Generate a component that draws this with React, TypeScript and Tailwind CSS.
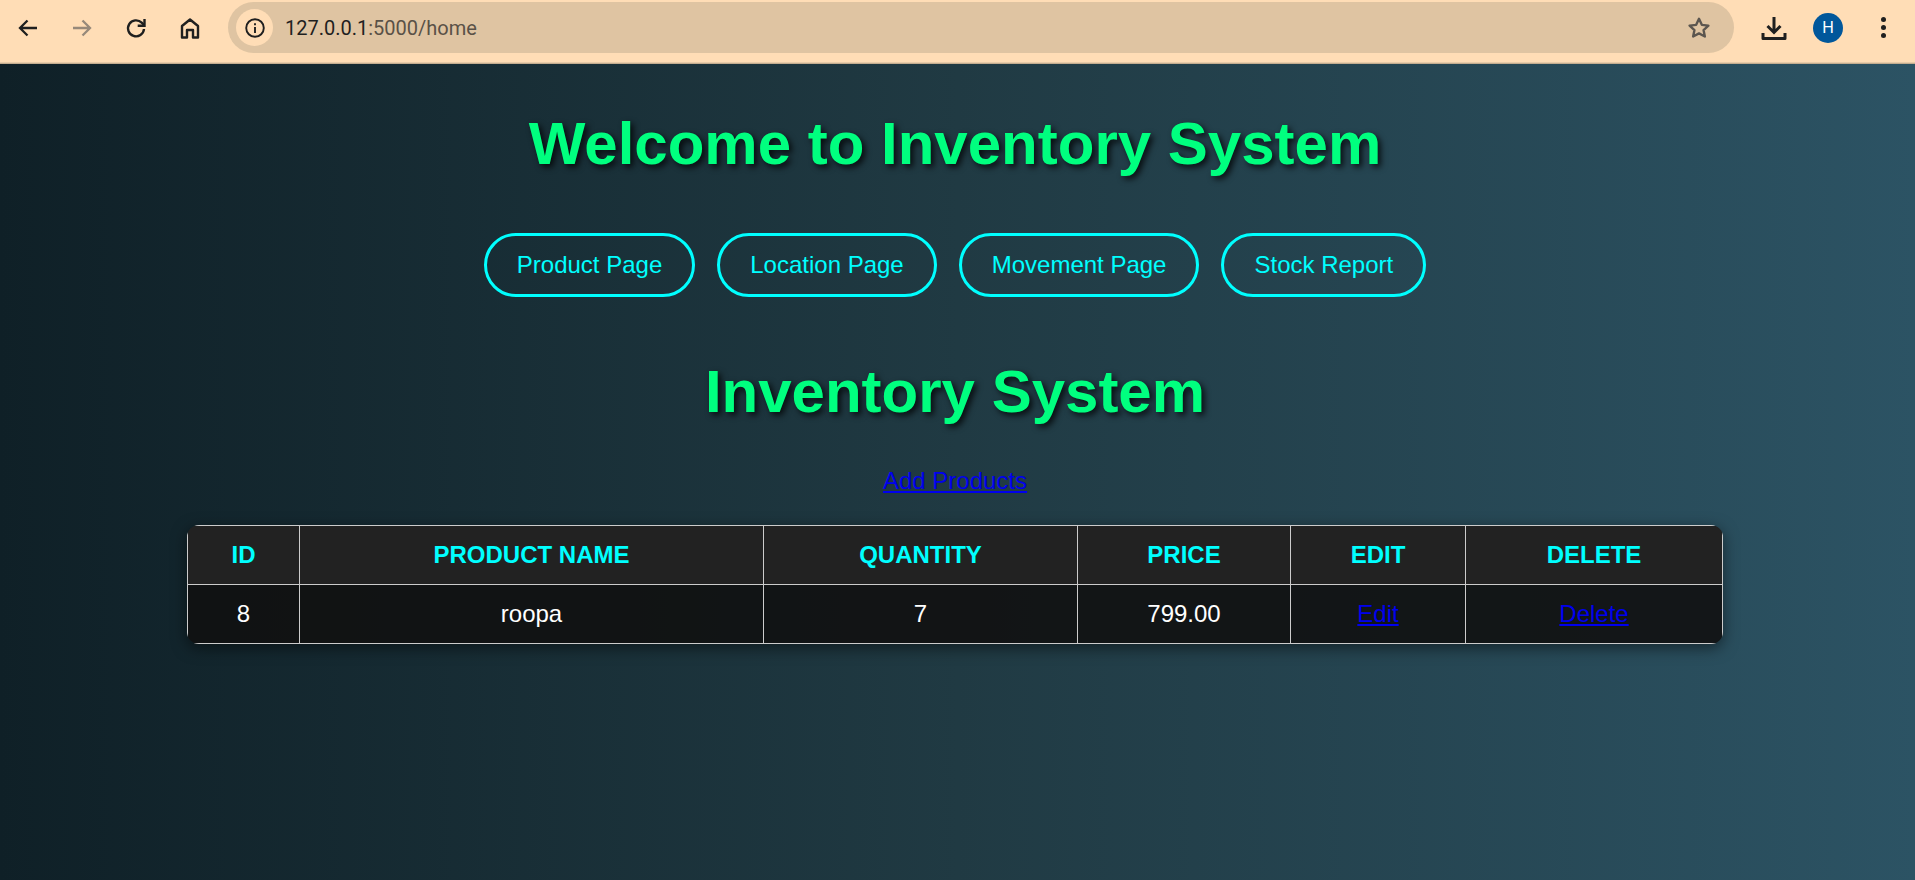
const arial = '"Liberation Sans", Arial, sans-serif';

function Tool({ children }: { children: React.ReactNode }) {
  return <div className="flex w-[54px] h-[36px] items-center justify-center">{children}</div>;
}

const navs = ["Product Page", "Location Page", "Movement Page", "Stock Report"];
const cols: [string, string][] = [
  ["ID", "w-[112px]"],
  ["PRODUCT NAME", "w-[464px]"],
  ["QUANTITY", "w-[314px]"],
  ["PRICE", "w-[213px]"],
  ["EDIT", "w-[175px]"],
  ["DELETE", "w-[257px]"],
];
const cell = "border border-[#cccccc] h-[59px] p-0 text-center text-[24px] leading-[28px]";

export default function App() {
  return (
    <div className="flex h-[880px] w-[1915px] flex-col overflow-hidden" style={{ fontFamily: arial }}>
      <header className="flex h-[64px] shrink-0 items-center border-b border-b-[#c4ad90] bg-[#ffddb6] pb-[8px] pl-px shadow-[inset_0_-1px_0_#e8cba8]">
        <Tool>
          <svg width="24" height="24" viewBox="0 0 24 24" fill="none" stroke="#1f1f1f" strokeWidth="2.3"><path d="M21 12H4M11.5 4.5 4 12l7.5 7.5" /></svg>
        </Tool>
        <Tool>
          <svg width="24" height="24" viewBox="0 0 24 24" fill="none" stroke="#97897a" strokeWidth="2.3"><path d="M3 12h17M12.5 4.5 20 12l-7.5 7.5" /></svg>
        </Tool>
        <Tool>
          <svg width="24" height="24" viewBox="0 0 24 24" fill="none" stroke="#1f1f1f" strokeWidth="2.4"><path d="M20 13a8 8 0 1 1-2.3-6.3L20 9" /><path d="M20.5 3V9.8H13.7" /></svg>
        </Tool>
        <Tool>
          <svg width="24" height="24" viewBox="0 0 24 24" fill="none" stroke="#1f1f1f" strokeWidth="2.4" strokeLinejoin="round"><path d="M4 21.5V10l8-6.5 8 6.5v11.5h-5v-7.5H9v7.5z" /></svg>
        </Tool>
        <div className="ml-[11px] flex h-[51px] w-[1506px] items-center rounded-full bg-[#dfc4a2] pl-[8px] pr-[22px]">
          <div className="flex h-[37px] w-[37px] items-center justify-center rounded-full bg-[#ffddb6]">
            <svg width="22" height="22" viewBox="0 0 22 22" fill="none" stroke="#1f1f1f" strokeWidth="1.9"><circle cx="11" cy="11" r="8.8" /><path d="M11 10v6M11 6.2v2" /></svg>
          </div>
          <div className="ml-[12px] flex-1 text-[20px] text-[#5a5147]" style={{ fontFamily: "Roboto, sans-serif" }}>
            <span className="text-[#1f1f1f]">127.0.0.1</span>:5000/home
          </div>
          <svg width="26" height="26" viewBox="0 0 24 24" fill="none" stroke="#5c564f" strokeWidth="2.2" strokeLinejoin="round"><path d="m12 3.5 2.6 5.6 6.1.7-4.5 4.1 1.2 6L12 17l-5.4 2.9 1.2-6-4.5-4.1 6.1-.7z" /></svg>
        </div>
        <div className="ml-[26px] flex w-[28px] justify-center">
          <svg width="26" height="26" viewBox="0 0 26 26" fill="none" stroke="#1f1f1f" strokeWidth="3"><path d="M13 2v15M6.5 11l6.5 6.5 6.5-6.5" /><path d="M2 18v5.5h22V18" strokeLinejoin="round" /></svg>
        </div>
        <div className="ml-[25px] flex h-[30px] w-[30px] items-center justify-center rounded-full bg-[#01579b] text-[16px] text-white">H</div>
        <div className="ml-[38px] flex flex-col gap-[3.5px]">
          <span className="h-[4.5px] w-[4.5px] rounded-full bg-[#1f1f1f]" />
          <span className="h-[4.5px] w-[4.5px] rounded-full bg-[#1f1f1f]" />
          <span className="h-[4.5px] w-[4.5px] rounded-full bg-[#1f1f1f]" />
        </div>
      </header>
      <main className="flex-1 bg-gradient-to-r from-[#0f2027] via-[#203a43] to-[#2c5364] pr-[5px]">
        <h1 className="mt-[45px] text-center text-[60px] leading-[69px] font-bold text-[#00ff7f] [text-shadow:3px_3px_6px_rgba(0,0,0,0.8)]">
          Welcome to Inventory System
        </h1>
        <nav className="mt-[55px] flex justify-center gap-[22px]">
          {navs.map((n) => (
            <a key={n} href="#" className="flex h-[64px] items-center rounded-[32px] border-[3px] border-[#00ffff] px-[30px] text-[24px] text-[#00ffff]">
              {n}
            </a>
          ))}
        </nav>
        <h1 className="mt-[60px] text-center text-[60px] leading-[69px] font-bold text-[#00ff7f] [text-shadow:3px_3px_6px_rgba(0,0,0,0.8)]">
          Inventory System
        </h1>
        <div className="mt-[41px] text-center text-[24px] leading-[28px]">
          <a href="#" className="text-[#0000ee] underline">Add Products</a>
        </div>
        <table className="mx-auto mt-[30px] w-[1535px] table-fixed border-collapse overflow-hidden rounded-[12px] shadow-[0_4px_15px_rgba(0,0,0,0.5)]">
          <thead>
            <tr>
              {cols.map(([c, w]) => (
                <th key={c} className={`${cell} ${w} bg-[#222222] font-bold text-[#00ffff]`}>{c}</th>
              ))}
            </tr>
          </thead>
          <tbody>
            <tr className="bg-[#111111]/90 text-white">
              <td className={cell}>8</td>
              <td className={cell}>roopa</td>
              <td className={cell}>7</td>
              <td className={cell}>799.00</td>
              <td className={cell}><a href="#" className="text-[#0000ee] underline">Edit</a></td>
              <td className={cell}><a href="#" className="text-[#0000ee] underline">Delete</a></td>
            </tr>
          </tbody>
        </table>
      </main>
    </div>
  );
}
